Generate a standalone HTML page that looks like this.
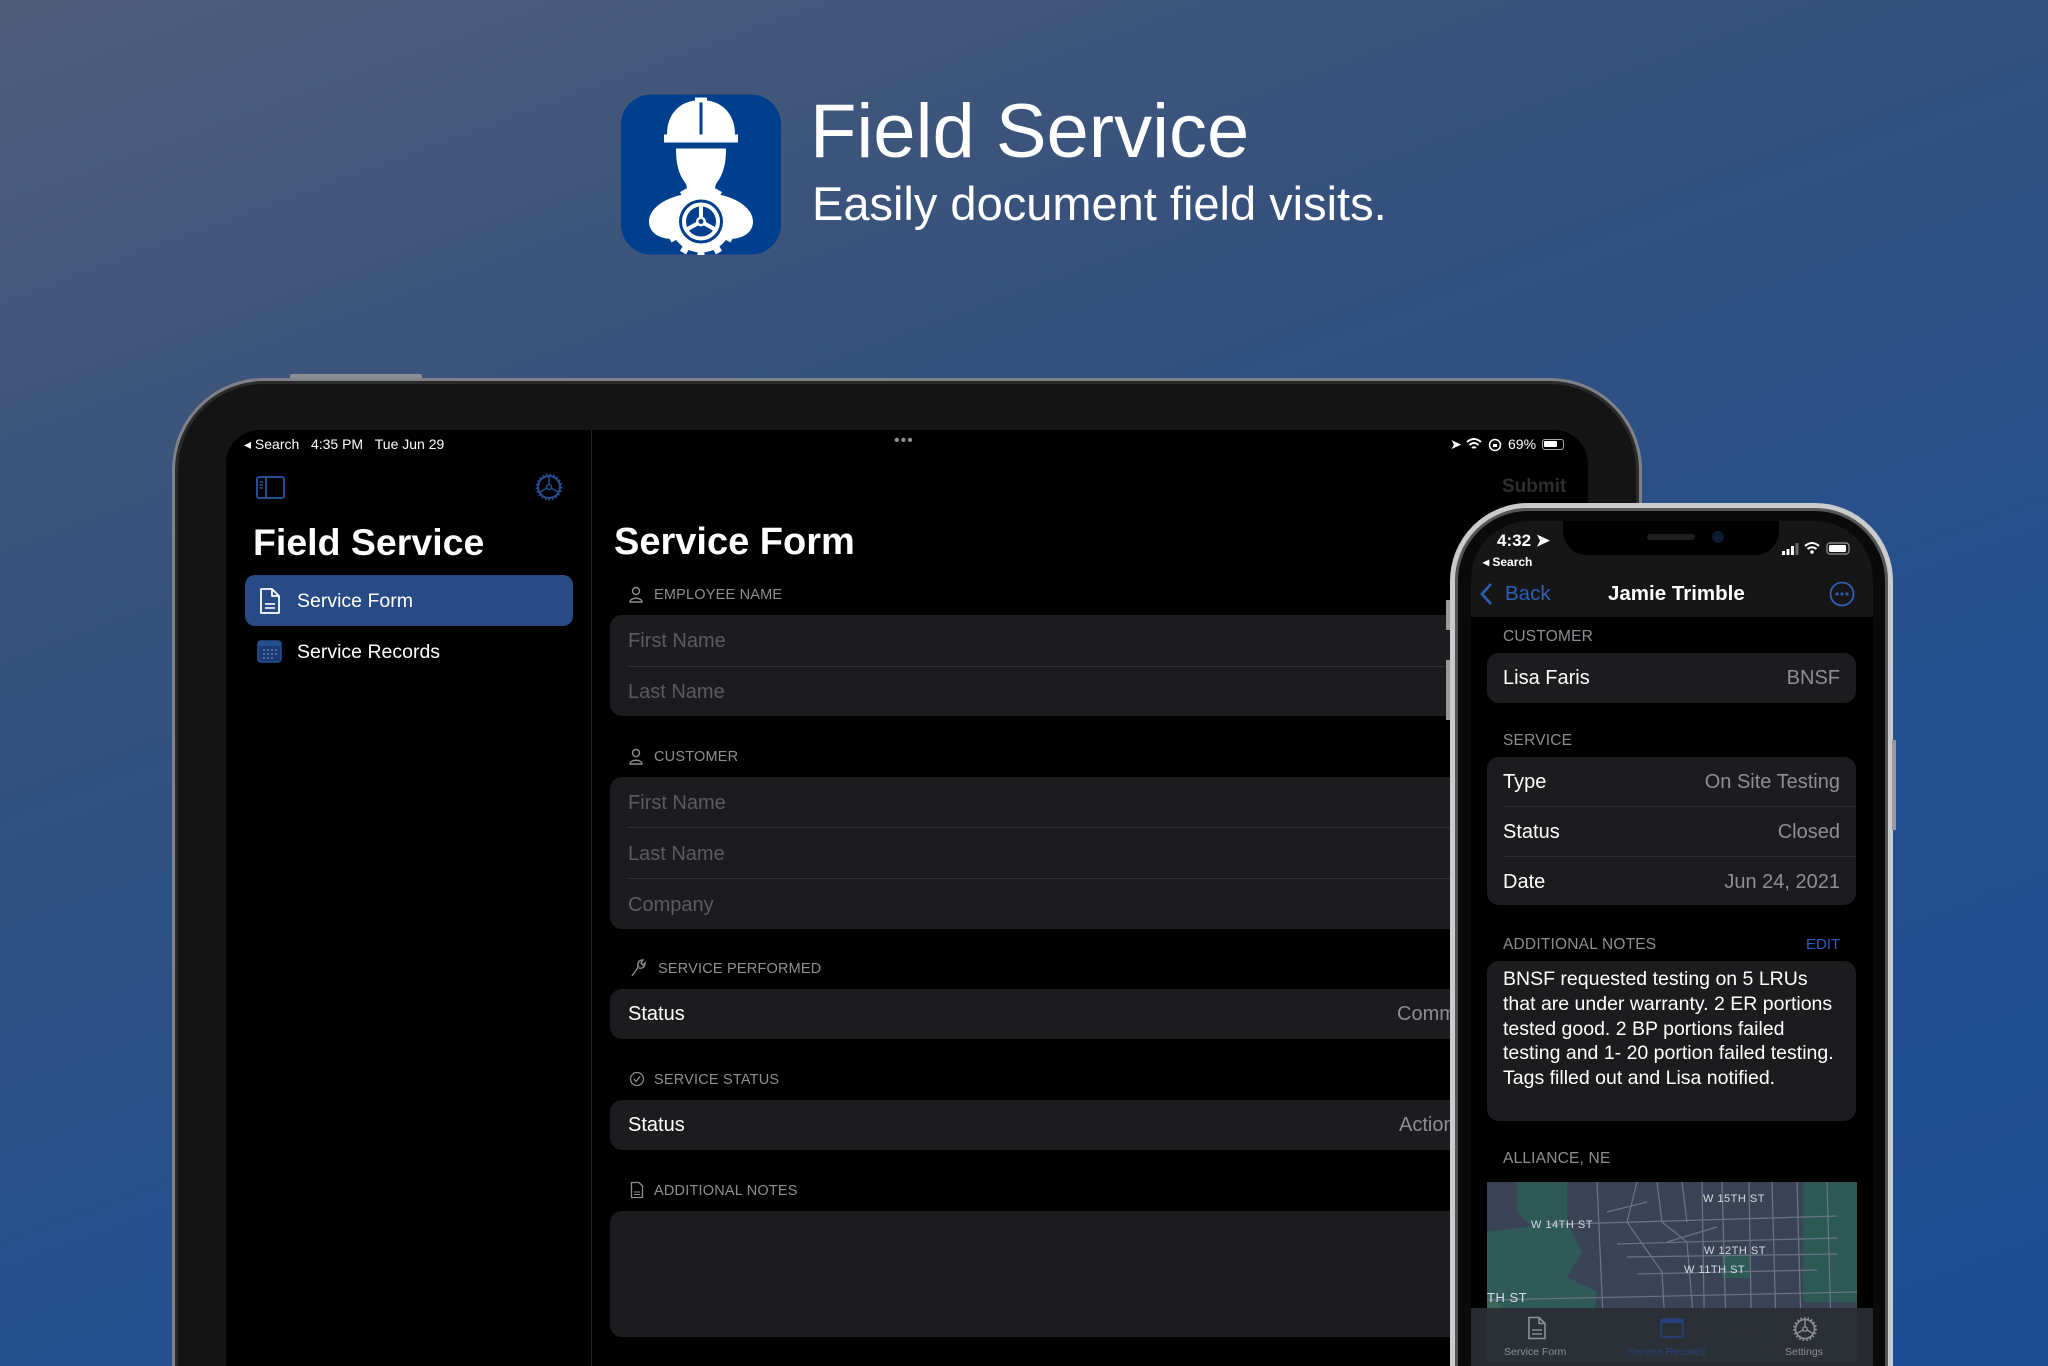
<!DOCTYPE html>
<html><head><meta charset="utf-8">
<style>
*{margin:0;padding:0;box-sizing:border-box}
html,body{width:2048px;height:1366px;overflow:hidden}
body{font-family:"Liberation Sans",sans-serif}
#root{position:relative;width:2048px;height:1366px;overflow:hidden;background:linear-gradient(160deg,#4d5d78 0%,#34507d 35%,#24508f 65%,#1d4c94 100%)}
.a{position:absolute}
.t{position:absolute;white-space:nowrap}
.hdr{position:absolute;font-size:15px;color:#8e8e93;letter-spacing:.2px}
.grp{position:absolute;background:#1c1c1e;border-radius:12px}
.ph{position:absolute;font-size:20px;color:#5b5b60}
.sep{position:absolute;height:1px;background:#333336}
</style></head><body><div id="root">

<!-- App icon -->
<svg class="a" style="left:621px;top:94px" width="160" height="161" viewBox="0 0 160 160">
<rect width="160" height="160" rx="30" fill="#003e8e"/>
<g fill="#fff">
<path d="M46 40 C46 20 58 8 74 6 L74 3 L86 3 L86 6 C102 8 114 20 114 40 L117 40 L117 48 L43 48 L43 40 Z"/>
<path d="M55 54 L105 54 C105 70 102 80 96 88 C93 92 94 96 98 100 C118 104 132 115 132 127 C132 140 118 146 104 144 L56 144 C42 146 28 140 28 127 C28 115 42 104 62 100 C66 96 67 92 64 88 C58 80 55 70 55 54 Z"/>
</g>
<rect x="78.5" y="8" width="3" height="32" fill="#003e8e"/>
<g transform="translate(80,127)">
<circle r="31" fill="#fff"/>
<g fill="#fff">
<rect x="-3.5" y="-36" width="7" height="8" transform="rotate(0)"/><rect x="-3.5" y="-36" width="7" height="8" transform="rotate(30)"/><rect x="-3.5" y="-36" width="7" height="8" transform="rotate(60)"/><rect x="-3.5" y="-36" width="7" height="8" transform="rotate(90)"/><rect x="-3.5" y="-36" width="7" height="8" transform="rotate(120)"/><rect x="-3.5" y="-36" width="7" height="8" transform="rotate(150)"/><rect x="-3.5" y="-36" width="7" height="8" transform="rotate(180)"/><rect x="-3.5" y="-36" width="7" height="8" transform="rotate(210)"/><rect x="-3.5" y="-36" width="7" height="8" transform="rotate(240)"/><rect x="-3.5" y="-36" width="7" height="8" transform="rotate(270)"/><rect x="-3.5" y="-36" width="7" height="8" transform="rotate(300)"/><rect x="-3.5" y="-36" width="7" height="8" transform="rotate(330)"/>
</g>
<circle r="22" fill="#003e8e"/>
<circle r="17" fill="none" stroke="#fff" stroke-width="4"/>
<g stroke="#fff" stroke-width="4"><line x1="0" y1="0" x2="0" y2="-18"/><line x1="0" y1="0" x2="16" y2="9"/><line x1="0" y1="0" x2="-16" y2="9"/></g>
<circle r="5" fill="#fff"/><circle r="2.5" fill="#003e8e"/>
</g>
</svg>
<div class="t" style="left:810px;top:88px;font-size:76px;color:#fff">Field Service</div>
<div class="t" style="left:812px;top:176px;font-size:47px;color:#fff">Easily document field visits.</div>

<!-- iPad -->
<div class="a" style="left:172px;top:378px;width:1470px;height:1100px;border-radius:92px;background:#141414;border:3px solid #7e8288;box-shadow:inset 0 0 0 3px #2b2b2b"></div>
<div class="a" style="left:290px;top:374px;width:90px;height:5px;background:#8a8d92;border-radius:2px"></div>
<div class="a" style="left:332px;top:374px;width:90px;height:5px;background:#8a8d92;border-radius:2px"></div>
<div class="a" style="left:226px;top:430px;width:1362px;height:1000px;border-radius:34px;background:#000;overflow:hidden">
  <div class="a" style="left:0;top:0;width:366px;height:1000px;background:#000;border-right:1px solid #232325"></div>
</div>
<!-- iPad status -->
<div class="t" style="left:244px;top:436px;font-size:14px;color:#fff">◂ Search&nbsp;&nbsp;&nbsp;4:35 PM&nbsp;&nbsp;&nbsp;Tue Jun 29</div>
<div class="t" style="left:894px;top:432px;font-size:16px;color:#8e8e93;letter-spacing:1px">•••</div>
<div class="t" style="left:1450px;top:436px;font-size:14px;color:#fff">➤</div>
<div class="t" style="left:1508px;top:436px;font-size:14px;color:#fff">69%</div>
<svg class="a" style="left:1465px;top:437px" width="45" height="16" viewBox="0 0 45 16"><path d="M2 5 Q9 -1 16 5 M4.5 8 Q9 4 13.5 8 M7 11 Q9 9.5 11 11" stroke="#fff" stroke-width="2" fill="none"/><circle cx="30" cy="8" r="5.5" stroke="#fff" stroke-width="1.5" fill="none"/><rect x="28" y="7" width="4" height="3" fill="#fff"/></svg>
<div class="a" style="left:1542px;top:439px;width:22px;height:11px;border:1.5px solid #aaa;border-radius:3px"><div style="width:13px;height:6px;margin:1px;background:#fff;border-radius:1px"></div></div>
<!-- sidebar -->
<svg class="a" style="left:256px;top:476px" width="30" height="24" viewBox="0 0 30 24"><rect x="1" y="1" width="27" height="21" rx="2" fill="none" stroke="#264f92" stroke-width="2"/><line x1="10" y1="1" x2="10" y2="22" stroke="#264f92" stroke-width="2"/><g stroke="#264f92" stroke-width="1.5"><line x1="3.5" y1="6" x2="7" y2="6"/><line x1="3.5" y1="9" x2="7" y2="9"/><line x1="3.5" y1="12" x2="7" y2="12"/></g></svg>
<svg class="a" style="left:535px;top:473px" width="28" height="28" viewBox="-14 -14 28 28"><circle r="11" fill="none" stroke="#264f92" stroke-width="2"/><circle r="2.5" fill="none" stroke="#264f92" stroke-width="1.5"/><g stroke="#264f92" stroke-width="1.5"><line y1="-2" y2="-10"/><line x1="2" y1="1" x2="9" y2="5"/><line x1="-2" y1="1" x2="-9" y2="5"/></g><circle r="12.5" fill="none" stroke="#264f92" stroke-width="2" stroke-dasharray="1.5 2.2"/></svg>
<div class="t" style="left:253px;top:521px;font-size:37.5px;font-weight:bold;color:#fff">Field Service</div>
<div class="a" style="left:245px;top:575px;width:328px;height:51px;border-radius:10px;background:#284a85"></div>
<svg class="a" style="left:258px;top:587px" width="24" height="28" viewBox="0 0 24 28"><path d="M3 2 H14 L21 9 V26 H3 Z M14 2 V9 H21" fill="none" stroke="#fff" stroke-width="1.8" stroke-linejoin="round"/><line x1="7" y1="17" x2="17" y2="17" stroke="#fff" stroke-width="1.6"/><line x1="7" y1="21" x2="17" y2="21" stroke="#fff" stroke-width="1.6"/></svg>
<div class="t" style="left:297px;top:590px;font-size:19.5px;color:#fff">Service Form</div>
<svg class="a" style="left:257px;top:640px" width="26" height="24" viewBox="0 0 26 24"><rect x="1" y="1" width="23" height="21" rx="3" fill="#1c3a70" stroke="#264f92" stroke-width="1.5"/><rect x="1" y="1" width="23" height="5" fill="#264f92"/><g fill="#5a7bc0"><circle cx="7" cy="10" r="1"/><circle cx="11" cy="10" r="1"/><circle cx="15" cy="10" r="1"/><circle cx="19" cy="10" r="1"/><circle cx="7" cy="14" r="1"/><circle cx="11" cy="14" r="1"/><circle cx="15" cy="14" r="1"/><circle cx="19" cy="14" r="1"/><circle cx="7" cy="18" r="1"/><circle cx="11" cy="18" r="1"/><circle cx="15" cy="18" r="1"/></g></svg>
<div class="t" style="left:297px;top:641px;font-size:19.5px;color:#fff">Service Records</div>
<!-- main -->
<div class="t" style="left:614px;top:521px;font-size:38px;font-weight:bold;color:#fff">Service Form</div>
<div class="t" style="left:1502px;top:476px;font-size:19px;font-weight:bold;color:#2e2e30">Submit</div>

<svg class="a" style="left:629px;top:586px" width="14" height="17" viewBox="0 0 14 17"><circle cx="7" cy="5" r="3.5" fill="none" stroke="#8e8e93" stroke-width="1.4"/><path d="M1 16 C1 11 13 11 13 16 Z" fill="none" stroke="#8e8e93" stroke-width="1.4"/></svg>
<div class="hdr" style="left:654px;top:587px;font-size:14.5px">EMPLOYEE NAME</div>
<div class="grp" style="left:610px;top:615px;width:1000px;height:101px"></div>
<div class="ph" style="left:628px;top:630px">First Name</div>
<div class="sep" style="left:628px;top:666px;width:1000px"></div>
<div class="ph" style="left:628px;top:681px">Last Name</div>

<svg class="a" style="left:629px;top:748px" width="14" height="17" viewBox="0 0 14 17"><circle cx="7" cy="5" r="3.5" fill="none" stroke="#8e8e93" stroke-width="1.4"/><path d="M1 16 C1 11 13 11 13 16 Z" fill="none" stroke="#8e8e93" stroke-width="1.4"/></svg>
<div class="hdr" style="left:654px;top:749px;font-size:14.5px">CUSTOMER</div>
<div class="grp" style="left:610px;top:777px;width:1000px;height:152px"></div>
<div class="ph" style="left:628px;top:792px">First Name</div>
<div class="sep" style="left:628px;top:827px;width:1000px"></div>
<div class="ph" style="left:628px;top:843px">Last Name</div>
<div class="sep" style="left:628px;top:878px;width:1000px"></div>
<div class="ph" style="left:628px;top:894px">Company</div>

<svg class="a" style="left:629px;top:958px" width="18" height="20" viewBox="0 0 18 20"><path d="M3 18 L10 8 M9 9 C8 5 10 2 14 2 L12 5 L14 7 L16 5 C16 9 13 11 10 10" fill="none" stroke="#8e8e93" stroke-width="1.4"/></svg>
<div class="hdr" style="left:658px;top:961px;font-size:14.5px">SERVICE PERFORMED</div>
<div class="grp" style="left:610px;top:989px;width:1000px;height:50px"></div>
<div class="t" style="left:628px;top:1003px;font-size:20px;color:#fff">Status</div>
<div class="t" style="left:1397px;top:1003px;font-size:20px;color:#8e8e93">Comm</div>

<svg class="a" style="left:629px;top:1071px" width="16" height="16" viewBox="0 0 16 16"><circle cx="8" cy="8" r="6.5" fill="none" stroke="#8e8e93" stroke-width="1.3"/><path d="M5 8 L7 10.5 L11 5.5" fill="none" stroke="#8e8e93" stroke-width="1.3"/></svg>
<div class="hdr" style="left:654px;top:1072px;font-size:14.5px">SERVICE STATUS</div>
<div class="grp" style="left:610px;top:1100px;width:1000px;height:50px"></div>
<div class="t" style="left:628px;top:1114px;font-size:20px;color:#fff">Status</div>
<div class="t" style="left:1399px;top:1114px;font-size:20px;color:#8e8e93">Action</div>

<svg class="a" style="left:630px;top:1181px" width="14" height="18" viewBox="0 0 14 18"><path d="M1.5 1.5 H9 L12.5 5 V16.5 H1.5 Z" fill="none" stroke="#8e8e93" stroke-width="1.3"/><line x1="4" y1="11" x2="10" y2="11" stroke="#8e8e93"/><line x1="4" y1="13.5" x2="10" y2="13.5" stroke="#8e8e93"/></svg>
<div class="hdr" style="left:654px;top:1183px;font-size:14.5px">ADDITIONAL NOTES</div>
<div class="grp" style="left:610px;top:1211px;width:1000px;height:126px"></div>

<!-- iPhone -->
<div class="a" style="left:1450px;top:503px;width:443px;height:960px;border-radius:78px;background:#0a0a0a;border:5px solid #c9cbcc;box-shadow:inset 0 0 0 3px #555"></div>
<div class="a" style="left:1446px;top:600px;width:4px;height:30px;background:#999"></div>
<div class="a" style="left:1446px;top:660px;width:4px;height:60px;background:#999"></div>
<div class="a" style="left:1892px;top:740px;width:4px;height:90px;background:#999"></div>
<div class="a" style="left:1471px;top:521px;width:402px;height:900px;border-radius:58px;background:#000;overflow:hidden">
  <div class="a" style="left:0;top:0;width:402px;height:96px;background:#161617"></div>
  <svg class="a" style="left:16px;top:661px" width="370" height="180" viewBox="0 0 370 180">
   <rect width="370" height="180" fill="#3a4356"/>
   <path d="M0 50 L80 40 L95 70 L80 95 L110 110 L100 180 L0 180 Z" fill="#2f5a58"/>
   <path d="M0 50 L0 110 L70 180 L0 180 Z" fill="#3b6659"/>
   <path d="M30 0 L80 0 L80 40 L45 45 L30 30 Z" fill="#2d5854"/>
   <rect x="316" y="0" width="54" height="120" fill="#2c5954"/>
   <rect x="235" y="72" width="28" height="24" fill="#2f5a55"/>
   <g stroke="#6b7488" stroke-width="1.2" fill="none">
    <path d="M0 118 L370 110"/><path d="M60 42 L80 42 L350 34"/><path d="M130 62 L350 56"/><path d="M140 75 L350 72"/><path d="M150 92 L330 88"/><path d="M110 0 L118 180"/><path d="M150 0 L140 40 L175 90 L180 180"/><path d="M170 0 L175 40 L200 60 L210 180"/><path d="M195 0 L200 40"/><path d="M235 0 L240 180"/><path d="M262 0 L265 180"/><path d="M285 0 L290 180"/><path d="M310 0 L315 180"/><path d="M340 0 L345 180"/><path d="M215 0 L218 180"/><path d="M180 60 L230 45"/><path d="M120 30 L160 20"/>
   </g>
   <g font-family="Liberation Sans" font-size="11" fill="#d8dce5" letter-spacing=".5">
    <text x="216" y="20">W 15TH ST</text><text x="44" y="46">W 14TH ST</text><text x="217" y="72">W 12TH ST</text><text x="197" y="91">W 11TH ST</text><text x="0" y="120" font-size="13">TH ST</text>
   </g>
  </svg>
  <div class="a" style="left:0;top:787px;width:402px;height:120px;background:rgba(42,46,52,.93)"></div>
</div>
<!-- notch -->
<div class="a" style="left:1563px;top:521px;width:216px;height:34px;background:#000;border-radius:0 0 24px 24px"></div>
<div class="a" style="left:1647px;top:534px;width:48px;height:6px;background:#1e1e1e;border-radius:3px"></div>
<div class="a" style="left:1712px;top:531px;width:12px;height:12px;background:#0d1b2e;border-radius:50%"></div>
<div class="t" style="left:1497px;top:531px;font-size:17px;font-weight:bold;color:#fff">4:32 ➤</div>
<div class="t" style="left:1483px;top:555px;font-size:12px;font-weight:bold;color:#fff">◂ Search</div>
<svg class="a" style="left:1781px;top:540px" width="74" height="16" viewBox="0 0 74 16"><g fill="#fff"><rect x="1" y="11" width="3" height="4"/><rect x="5.5" y="9" width="3" height="6"/><rect x="10" y="6" width="3" height="9"/><rect x="14.5" y="3" width="3" height="12" fill="#666"/></g><path d="M24 6 Q31 0 38 6 M26.5 9 Q31 5.5 35.5 9" stroke="#fff" stroke-width="2" fill="none"/><circle cx="31" cy="12" r="1.8" fill="#fff"/><rect x="46" y="3" width="22" height="11" rx="3" fill="none" stroke="#999" stroke-width="1.2"/><rect x="48" y="5" width="17" height="7" rx="1.5" fill="#fff"/></svg>
<svg class="a" style="left:1480px;top:582px" width="14" height="24" viewBox="0 0 14 24"><path d="M11 2 L2 12 L11 22" stroke="#2d5fb5" stroke-width="2.6" fill="none"/></svg>
<div class="t" style="left:1505px;top:582px;font-size:20.5px;color:#2d5fb5">Back</div>
<div class="t" style="left:1608px;top:582px;font-size:20.5px;font-weight:bold;color:#fff">Jamie Trimble</div>
<svg class="a" style="left:1829px;top:581px" width="26" height="26" viewBox="0 0 26 26"><circle cx="13" cy="13" r="11.5" fill="none" stroke="#2d5fb5" stroke-width="1.8"/><g fill="#2d5fb5"><circle cx="8" cy="13" r="1.6"/><circle cx="13" cy="13" r="1.6"/><circle cx="18" cy="13" r="1.6"/></g></svg>

<div class="hdr" style="left:1503px;top:628px;font-size:15.5px">CUSTOMER</div>
<div class="grp" style="left:1487px;top:653px;width:369px;height:50px"></div>
<div class="t" style="left:1503px;top:667px;font-size:20px;color:#fff">Lisa Faris</div>
<div class="t" style="left:1740px;top:667px;font-size:20px;color:#8e8e93;width:100px;text-align:right">BNSF</div>

<div class="hdr" style="left:1503px;top:732px;font-size:15.5px">SERVICE</div>
<div class="grp" style="left:1487px;top:757px;width:369px;height:148px"></div>
<div class="t" style="left:1503px;top:771px;font-size:20px;color:#fff">Type</div>
<div class="t" style="left:1640px;top:771px;font-size:20px;color:#8e8e93;width:200px;text-align:right">On Site Testing</div>
<div class="sep" style="left:1503px;top:806px;width:353px;background:#2c2c2e"></div>
<div class="t" style="left:1503px;top:821px;font-size:20px;color:#fff">Status</div>
<div class="t" style="left:1640px;top:821px;font-size:20px;color:#8e8e93;width:200px;text-align:right">Closed</div>
<div class="sep" style="left:1503px;top:856px;width:353px;background:#2c2c2e"></div>
<div class="t" style="left:1503px;top:871px;font-size:20px;color:#fff">Date</div>
<div class="t" style="left:1640px;top:871px;font-size:20px;color:#8e8e93;width:200px;text-align:right">Jun 24, 2021</div>

<div class="hdr" style="left:1503px;top:936px;font-size:15.5px">ADDITIONAL NOTES</div>
<div class="t" style="left:1806px;top:936px;font-size:15px;color:#2d5fb5">EDIT</div>
<div class="grp" style="left:1487px;top:961px;width:369px;height:160px"></div>
<div class="a" style="left:1503px;top:967px;width:336px;font-size:19.5px;line-height:24.8px;color:#fff">BNSF requested testing on 5 LRUs that are under warranty. 2 ER portions tested good. 2 BP portions failed testing and 1- 20 portion failed testing. Tags filled out and Lisa notified.</div>

<div class="hdr" style="left:1503px;top:1150px;font-size:15.5px">ALLIANCE, NE</div>

<!-- tab items -->
<svg class="a" style="left:1527px;top:1316px" width="20" height="24" viewBox="0 0 20 24"><path d="M2 1.5 H12 L18 7.5 V22.5 H2 Z M12 1.5 V7.5 H18" fill="none" stroke="#8e9097" stroke-width="1.6"/><line x1="5" y1="14" x2="15" y2="14" stroke="#8e9097" stroke-width="1.4"/><line x1="5" y1="18" x2="15" y2="18" stroke="#8e9097" stroke-width="1.4"/></svg>
<div class="t" style="left:1504px;top:1346px;font-size:10.5px;color:#8e9097">Service Form</div>
<svg class="a" style="left:1660px;top:1318px" width="24" height="20" viewBox="0 0 24 20"><rect x="1" y="1" width="22" height="18" rx="3" fill="none" stroke="#23427e" stroke-width="1.6"/><rect x="1" y="1" width="22" height="4" fill="#23427e"/></svg>
<div class="t" style="left:1628px;top:1346px;font-size:10.5px;color:#23427e">Service Records</div>
<svg class="a" style="left:1792px;top:1316px" width="26" height="26" viewBox="-13 -13 26 26"><circle r="9.5" fill="none" stroke="#8e9097" stroke-width="1.6"/><circle r="11" fill="none" stroke="#8e9097" stroke-width="2" stroke-dasharray="1.6 2"/><circle r="2.2" fill="none" stroke="#8e9097" stroke-width="1.3"/><g stroke="#8e9097" stroke-width="1.4"><line y1="-2" y2="-9"/><line x1="2" y1="1" x2="8" y2="4.5"/><line x1="-2" y1="1" x2="-8" y2="4.5"/></g></svg>
<div class="t" style="left:1785px;top:1346px;font-size:10.5px;color:#8e9097">Settings</div>
</div></body></html>
